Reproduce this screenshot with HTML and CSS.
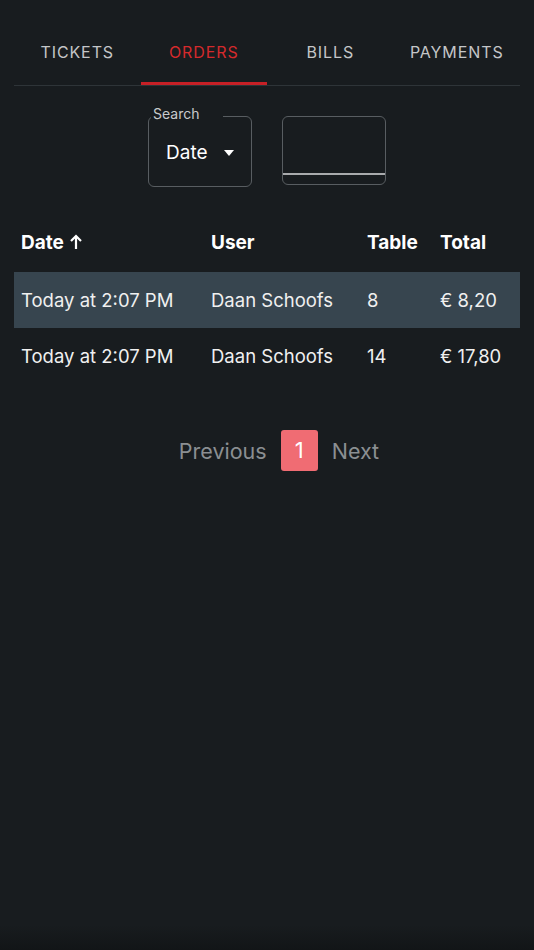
FILE: index.html
```html
<!DOCTYPE html>
<html>
<head>
<meta charset="utf-8">
<link rel="stylesheet" href="styles.css">
</head>
<body>
<div class="page">
  <nav class="tabs">
    <div class="tab">TICKETS</div>
    <div class="tab active">ORDERS</div>
    <div class="tab">BILLS</div>
    <div class="tab">PAYMENTS</div>
  </nav>

  <div class="filters">
    <div class="select">
      <span class="legend">Search</span>
      <span class="select-value">Date</span>
      <span class="caret"></span>
    </div>
    <div class="field">
      <div class="field-input"></div>
    </div>
  </div>

  <table class="orders">
    <thead>
      <tr>
        <th class="c-date">Date <svg class="sort" width="14" height="16" viewBox="0 0 14 16"><path d="M7 15V2M2 7l5-5 5 5" fill="none" stroke="#fff" stroke-width="2.2" stroke-linecap="butt" stroke-linejoin="miter"/></svg></th>
        <th class="c-user">User</th>
        <th class="c-table">Table</th>
        <th class="c-total">Total</th>
      </tr>
    </thead>
    <tbody>
      <tr class="selected">
        <td>Today at 2:07 PM</td>
        <td>Daan Schoofs</td>
        <td>8</td>
        <td>€ 8,20</td>
      </tr>
      <tr>
        <td>Today at 2:07 PM</td>
        <td>Daan Schoofs</td>
        <td>14</td>
        <td>€ 17,80</td>
      </tr>
    </tbody>
  </table>

  <div class="pager">
    <span class="pager-link">Previous</span>
    <span class="pager-page">1</span>
    <span class="pager-link">Next</span>
  </div>
</div>
</body>
</html>
```

FILE: styles.css
```css
html, body {
  margin: 0;
  padding: 0;
  background: #181c1f;
  height: 100%;
}
body {
  font-family: Inter, "Noto Sans", sans-serif;
  color: #f2f2f2;
  background: linear-gradient(to bottom, #181c1f 0, #181c1f 925px, #121517 950px);
}
.page {
  padding: 20px 14px 0;
}
.tabs {
  display: grid;
  grid-template-columns: repeat(4, 1fr);
  border-bottom: 1px solid #2e3438;
}
.tab {
  box-sizing: border-box;
  height: 65px;
  padding-top: 1px;
  line-height: 62px;
  text-align: center;
  font-size: 16px;
  letter-spacing: 0.9px;
  color: #c4c6c8;
  border-bottom: 3px solid transparent;
}
.tab.active {
  color: #d42a2c;
  border-bottom-color: #c62026;
}
.filters {
  display: flex;
  justify-content: center;
  gap: 30px;
  margin-top: 30px;
}
.select {
  position: relative;
  box-sizing: border-box;
  width: 104px;
  height: 71px;
  border: 1px solid #585d61;
  border-radius: 6px;
  display: flex;
  align-items: center;
  padding-left: 17px;
}
.legend {
  position: absolute;
  top: -12px;
  left: 2px;
  padding: 0 24px 0 2px;
  font-size: 14px;
  line-height: 18px;
  color: #c8cacc;
  background: #181c1f;
}
.select-value {
  font-size: 19px;
  color: #ffffff;
  margin-top: 2px;
}
.caret {
  width: 0;
  height: 0;
  border-left: 5.5px solid transparent;
  border-right: 5.5px solid transparent;
  border-top: 6px solid #ffffff;
  margin-left: 16px;
  margin-top: 2px;
}
.field {
  box-sizing: border-box;
  width: 104px;
  height: 69px;
  border: 1px solid #585d61;
  border-radius: 6px;
  display: flex;
  flex-direction: column;
}
.field-input {
  height: 56px;
  border-bottom: 2px solid #a9abad;
}
.orders {
  width: 100%;
  border-collapse: collapse;
  margin-top: 27px;
  font-size: 18.5px;
  table-layout: fixed;
}
.orders th {
  text-align: left;
  font-weight: 700;
  font-size: 19px;
  height: 57px;
  padding: 0 0 1px 7px;
  color: #ffffff;
}
.orders .c-date { width: 183px; }
.orders .c-user { width: 149px; }
.orders .c-table { width: 66px; }
.sort {
  vertical-align: -1px;
  margin-left: 1px;
}
.orders td {
  height: 55px;
  padding: 0 0 1px 7px;
  color: #f0f0f0;
  white-space: nowrap;
}
.orders tr.selected td {
  background: #37454f;
}
.pager {
  display: flex;
  justify-content: center;
  align-items: center;
  gap: 14px;
  margin-top: 46px;
  padding-left: 24px;
}
.pager-link {
  font-size: 21.5px;
  color: #8b8f92;
}
.pager-page {
  width: 37px;
  height: 41px;
  line-height: 41px;
  text-align: center;
  background: #f06c73;
  border-radius: 3px;
  color: #ffffff;
  font-size: 22px;
}
```
